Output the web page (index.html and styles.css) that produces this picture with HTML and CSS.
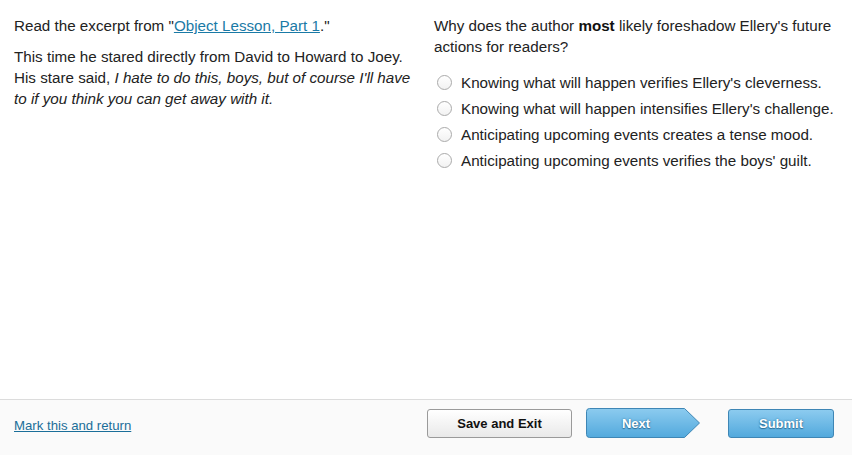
FILE: index.html
```html
<!DOCTYPE html>
<html>
<head>
<meta charset="utf-8">
<link rel="stylesheet" href="styles.css">
</head>
<body>
<div class="page">
  <main class="content">
    <section class="passage">
      <p>Read the excerpt from "<a href="#" class="link">Object Lesson, Part 1</a>."</p>
      <p>This time he stared directly from David to Howard to Joey. His stare said, <em>I hate to do this, boys, but of course I'll have to if you think you can get away with it.</em></p>
    </section>
    <section class="question">
      <p class="prompt">Why does the author <strong>most</strong> likely foreshadow Ellery's future actions for readers?</p>
      <ul class="options">
        <li><span class="radio"></span>Knowing what will happen verifies Ellery's cleverness.</li>
        <li><span class="radio"></span>Knowing what will happen intensifies Ellery's challenge.</li>
        <li><span class="radio"></span>Anticipating upcoming events creates a tense mood.</li>
        <li><span class="radio"></span>Anticipating upcoming events verifies the boys' guilt.</li>
      </ul>
    </section>
  </main>
  <footer class="footer">
    <a href="#" class="mark">Mark this and return</a>
    <div class="buttons">
      <button class="btn save">Save and Exit</button>
      <button class="btn next">
        <svg class="next-shape" width="115" height="30" viewBox="0 0 115 30">
          <defs>
            <linearGradient id="ng" x1="0" y1="0" x2="0" y2="1">
              <stop offset="0" stop-color="#8ccbef"/>
              <stop offset="1" stop-color="#52a9dd"/>
            </linearGradient>
          </defs>
          <path d="M3.5 0.5 H98.5 L113.5 15 L98.5 29.5 H3.5 Q0.5 29.5 0.5 26.5 V3.5 Q0.5 0.5 3.5 0.5 Z" fill="url(#ng)" stroke="#3e86b5" stroke-width="1"/>
        </svg>
        <span class="next-label">Next</span>
      </button>
      <button class="btn submit">Submit</button>
    </div>
  </footer>
</div>
</body>
</html>
```

FILE: styles.css
```css
* { box-sizing: border-box; }
html, body { margin: 0; padding: 0; }
body {
  font-family: "Liberation Sans", Arial, Helvetica, sans-serif;
  color: #222;
  background: #fff;
  width: 852px;
  height: 455px;
  overflow: hidden;
}
.page {
  display: flex;
  flex-direction: column;
  height: 455px;
}
.content {
  flex: 1;
  display: flex;
  padding: 15px 14px 0 14px;
}
.passage {
  width: 406px;
  margin-right: 14px;
}
.passage p {
  margin: 0 0 10px 0;
  font-size: 15.2px;
  line-height: 21px;
}
.link {
  color: #1a7aa6;
  text-decoration: underline;
}
.question {
  flex: 1;
}
.prompt {
  margin: 0 0 12px 0;
  font-size: 15.2px;
  line-height: 21px;
}
.prompt strong { font-weight: bold; color: #111; }
.options {
  list-style: none;
  margin: 0;
  padding: 0;
}
.options li {
  display: flex;
  align-items: center;
  height: 26px;
  font-size: 15.2px;
  color: #222;
}
.radio {
  width: 15px;
  height: 15px;
  border: 1px solid #aaa;
  border-radius: 50%;
  background: linear-gradient(#fff, #f2f2f2);
  margin: 0 9px 0 3px;
  flex: none;
}
.footer {
  height: 56px;
  border-top: 1px solid #dcdcdc;
  background: #fafafa;
  display: flex;
  align-items: flex-start;
  justify-content: space-between;
  padding: 8px 18px 0 14px;
}
.mark {
  font-size: 13.2px;
  color: #1a6e99;
  text-decoration: underline;
  margin-top: 10px;
}
.buttons {
  display: flex;
  align-items: center;
}
.btn {
  font-family: "Liberation Sans", Arial, Helvetica, sans-serif;
  font-weight: bold;
  font-size: 13px;
  height: 29px;
  padding: 0;
  cursor: pointer;
}
.save {
  width: 145px;
  background: linear-gradient(#ffffff, #e9e9e9);
  border: 1px solid #9a9a9a;
  border-radius: 3px;
  color: #111;
  margin-right: 14px;
}
.next {
  position: relative;
  width: 115px;
  height: 30px;
  background: none;
  border: none;
  margin-right: 27px;
  color: #fff;
}
.next-shape {
  position: absolute;
  left: 0;
  top: 0;
  display: block;
}
.next-label {
  position: relative;
  display: block;
  width: 100px;
  text-align: center;
  line-height: 30px;
  margin-top: 1px;
  text-shadow: 0 0 2px #2e6f99, 0 1px 1px #2e6f99;
}
.submit {
  width: 106px;
  background: linear-gradient(#8ccbef, #52a9dd);
  border: 1px solid #3e86b5;
  border-radius: 3px;
  color: #fff;
  text-shadow: 0 0 2px #2e6f99, 0 1px 1px #2e6f99;
}
```
